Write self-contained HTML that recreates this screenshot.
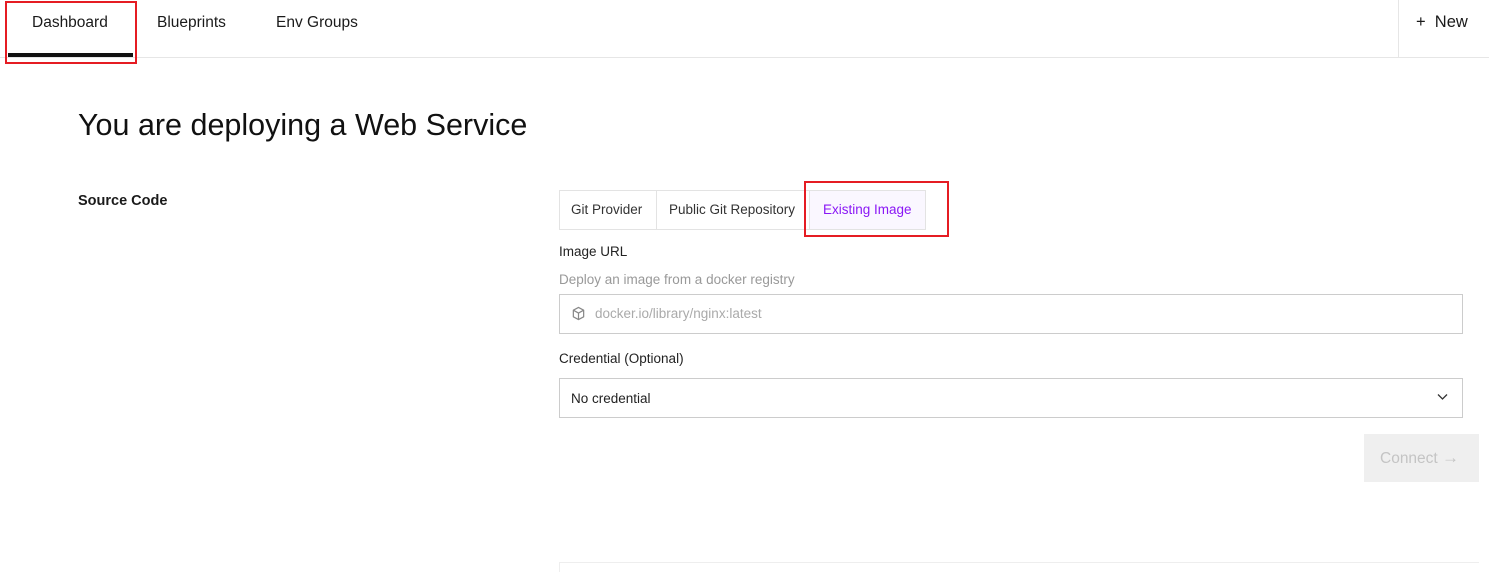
<!DOCTYPE html>
<html><head><style>
*{margin:0;padding:0;box-sizing:border-box}
body{width:1489px;height:568px;background:#fff;font-family:"Liberation Sans",sans-serif;color:#1a1a1a;position:relative;overflow:hidden}
.a{position:absolute;white-space:nowrap}
</style></head><body>
<div class="a" style="left:0;top:57px;width:1489px;height:1px;background:#e6e6e6"></div>
<div class="a" style="left:32px;top:14px;font-size:15.5px">Dashboard</div>
<div class="a" style="left:8px;top:53px;width:125px;height:4px;background:#111"></div>
<div class="a" style="left:5px;top:1px;width:132px;height:63px;border:2px solid #e51c23"></div>
<div class="a" style="left:157px;top:14px;font-size:15.5px">Blueprints</div>
<div class="a" style="left:276px;top:14px;font-size:15.5px">Env Groups</div>
<div class="a" style="left:1398px;top:0;width:1px;height:57px;background:#e6e6e6"></div>
<div class="a" style="left:1416px;top:13px;font-size:16.5px">+&nbsp; New</div>

<div class="a" style="left:78px;top:108px;font-size:30.5px;color:#111">You are deploying a Web Service</div>
<div class="a" style="left:78px;top:193px;font-size:14.5px;font-weight:bold">Source Code</div>

<div class="a" style="left:559px;top:190px;width:367px;height:40px;border:1px solid #e3e3e3"></div>
<div class="a" style="left:656px;top:190px;width:1px;height:40px;background:#e3e3e3"></div>
<div class="a" style="left:809px;top:190px;width:117px;height:40px;background:#faf7ff;border:1px solid #e3e3e3"></div>
<div class="a" style="left:571px;top:202px;font-size:13.5px;color:#333">Git Provider</div>
<div class="a" style="left:669px;top:202px;font-size:13.5px;color:#333">Public Git Repository</div>
<div class="a" style="left:823px;top:202px;font-size:13.5px;color:#8a17f5">Existing Image</div>
<div class="a" style="left:804px;top:181px;width:145px;height:56px;border:2px solid #e51c23"></div>

<div class="a" style="left:559px;top:244px;font-size:13.5px;color:#222">Image URL</div>
<div class="a" style="left:559px;top:272px;font-size:13.5px;color:#999">Deploy an image from a docker registry</div>
<div class="a" style="left:559px;top:294px;width:904px;height:40px;border:1px solid #ccc"></div>
<svg class="a" style="left:571px;top:306px" width="15" height="15" viewBox="0 0 16 16" fill="none" stroke="#888" stroke-width="1.3" stroke-linejoin="round"><path d="M8 1.5l5.5 3v7L8 14.5 2.5 11.5v-7z M2.5 4.5L8 7.5l5.5-3 M8 7.5v7"/></svg>
<div class="a" style="left:595px;top:306px;font-size:13.5px;color:#aaa">docker.io/library/nginx:latest</div>

<div class="a" style="left:559px;top:351px;font-size:13.5px;color:#222">Credential (Optional)</div>
<div class="a" style="left:559px;top:378px;width:904px;height:40px;border:1px solid #ccc"></div>
<div class="a" style="left:571px;top:391px;font-size:13.5px;color:#222">No credential</div>
<svg class="a" style="left:1437px;top:393px" width="11" height="8" viewBox="0 0 11 8" fill="none" stroke="#333" stroke-width="1.3"><path d="M1 1.5l4.5 4.5 4.5-4.5"/></svg>

<div class="a" style="left:1364px;top:434px;width:115px;height:48px;background:#efefef"></div>
<div class="a" style="left:1380px;top:448px;font-size:15.5px;color:#c4c4c4">Connect <span style="font-size:17px">→</span></div>

<div class="a" style="left:559px;top:562px;width:920px;height:10px;border-top:1px solid #eee;border-left:1px solid #eee"></div>
</body></html>
